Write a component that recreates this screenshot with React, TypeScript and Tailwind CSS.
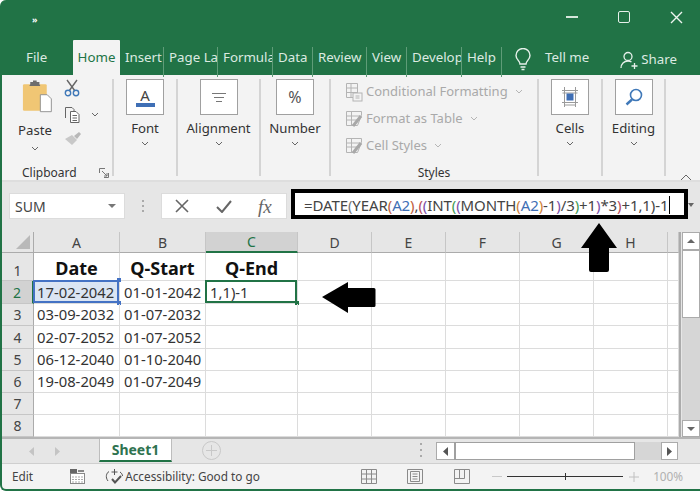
import type { ReactNode } from "react";

const tabs = [
  { label: "Insert", w: "w-[44px]" },
  { label: "Page La", w: "w-[54px]" },
  { label: "Formula", w: "w-[55px]" },
  { label: "Data", w: "w-[40px]" },
  { label: "Review", w: "w-[54px]" },
  { label: "View", w: "w-[40px]" },
  { label: "Develop", w: "w-[55px]" },
  { label: "Help", w: "w-[40px]" },
];

const columns = ["A", "B", "C", "D", "E", "F", "G", "H", ""];
const rowHeights = ["h-[28px]", "h-[23px]", "h-[22px]", "h-[23px]", "h-[22px]", "h-[22px]", "h-[22px]", "h-[22px]"];
const dates = [
  ["17-02-2042", "01-01-2042"],
  ["03-09-2032", "01-07-2032"],
  ["02-07-2052", "01-07-2052"],
  ["06-12-2040", "01-10-2040"],
  ["19-08-2049", "01-07-2049"],
];

function Chevron({ className = "text-[#666]" }: { className?: string }) {
  return (
    <svg width="8" height="5" viewBox="0 0 8 5" className={className}>
      <path d="M1 1l3 3 3-3" fill="none" stroke="currentColor" strokeWidth="1" />
    </svg>
  );
}

function BigGroup({ w, label, children }: { w: string; label: string; children: ReactNode }) {
  return (
    <div className={`${w} h-[97px] border-r-2 border-[#d4d4d4] flex flex-col items-center`}>
      <div className="w-[38px] h-[36px] bg-white border border-[#a0a0a0] flex items-center justify-center">
        {children}
      </div>
      <div className="mt-[3px] text-[13.2px] leading-[20px] text-[#333]">{label}</div>
      <div className="mt-[3px] flex"><Chevron /></div>
    </div>
  );
}

function StyleRow({ label, icon }: { label: string; icon: ReactNode }) {
  return (
    <div className="h-[27px] flex items-center gap-[3px] pl-[14px] text-[13px] text-[#a9a9a9]">
      {icon}
      <span>{label}</span>
      <span className="ml-[4px] flex"><Chevron className="text-[#b5b5b5]" /></span>
    </div>
  );
}

function ConditionalIcon() {
  return (
    <svg width="18" height="20" viewBox="0 0 18 20" fill="none" stroke="#b4b4b4">
      <path d="M1.5 1.5h11v14h-11zM1.5 6h11M1.5 10.5h11M6 1.5v14" />
      <rect x="8" y="11" width="9" height="8" fill="#f3f3f3" />
      <path d="M10.5 14h4M10.5 16h4" />
    </svg>
  );
}

function TableIcon() {
  return (
    <svg width="18" height="18" viewBox="0 0 18 18" fill="none" stroke="#b4b4b4">
      <path d="M1.5 1.5h15v4l-4 10h-11zM1.5 6h14M1.5 10h12M6.5 1.5v14" />
      <path d="M8 16l8-10" stroke="#a8a8a8" strokeWidth="3" />
    </svg>
  );
}

function FormulaText() {
  return (
    <span className="tracking-[-0.1px]">
      =DATE<span className="text-[#777]">(</span>YEAR<span className="text-[#c0603c]">(</span>
      <span className="text-[#3f6fb5]">A2</span>
      <span className="text-[#c0603c]">)</span>,<span className="text-[#b84a5a]">(</span>
      <span className="text-[#7b4fa8]">(</span>INT<span className="text-[#3f9a55]">(</span>
      <span className="text-[#7b4fa8]">(</span>MONTH<span className="text-[#d0813a]">(</span>
      <span className="text-[#3f6fb5]">A2</span>
      <span className="text-[#d0813a]">)</span>-1<span className="text-[#7b4fa8]">)</span>/3
      <span className="text-[#3f9a55]">)</span>+1<span className="text-[#7b4fa8]">)</span>*3
      <span className="text-[#b84a5a]">)</span>+1,1)-1
    </span>
  );
}

function ColumnHeader({ label }: { label: string }) {
  const active = label === "C";
  return (
    <div
      className={`h-[21px] flex items-center justify-center text-[14px] border-r border-[#c6c6c6] ${
        active ? "bg-[#d2d2d2] text-[#217346] border-b-2 border-b-[#217346]" : "bg-[#e6e6e6] text-[#444] border-b border-b-[#ababab]"
      }`}
    >
      {label}
    </div>
  );
}

function SheetRow({ index }: { index: number }) {
  const row = index + 1;
  const values = row >= 2 && row <= 6 ? dates[row - 2] : null;
  const height = rowHeights[index];
  const line = "border-r border-b border-[#dcdcdc]";
  return (
    <>
      <div
        className={`${height} flex items-center justify-center text-[14px] border-b border-[#c6c6c6] ${
          row === 2 ? "bg-[#d2d2d2] text-[#217346] border-r-2 border-r-[#217346]" : "bg-[#e6e6e6] text-[#444] border-r border-r-[#ababab]"
        } ${row === 1 ? "pt-[8px]" : ""}`}
      >
        {row}
      </div>
      {row === 1 ? (
        ["Date", "Q-Start", "Q-End"].map((title) => (
          <div key={title} className={`${height} ${line} flex items-center justify-center pt-[3px] text-[18px] font-bold text-[#111]`}>
            {title}
          </div>
        ))
      ) : (
        <>
          <div className={`${height} ${line} relative flex items-center pl-[3px] text-[14.8px] text-[#333] ${row === 2 ? "bg-[#dbe5f3]" : ""}`}>
            {values?.[0]}
            {row === 2 && (
              <>
                <div className="absolute inset-0 -top-px -left-px border-2 border-[#4472c4]" />
                <div className="absolute -top-[3px] -right-[2px] w-[4px] h-[4px] bg-[#4472c4]" />
                <div className="absolute -bottom-[2px] -right-[2px] w-[4px] h-[4px] bg-[#4472c4]" />
              </>
            )}
          </div>
          <div className={`${height} ${line} flex items-center pl-[4px] text-[14.8px] text-[#333]`}>{values?.[1]}</div>
          <div className={`${height} ${line} relative flex items-center pl-[4px] text-[14.8px] text-[#333]`}>
            {row === 2 && (
              <>
                1,1)-1
                <div className="absolute inset-0 -top-px -left-px border-2 border-[#217346]" />
                <div className="absolute -bottom-[2px] -right-[2px] w-[4px] h-[4px] bg-[#217346]" />
              </>
            )}
          </div>
        </>
      )}
      {[0, 1, 2, 3, 4, 5].map((cell) => (
        <div key={cell} className={`${height} ${line}`} />
      ))}
    </>
  );
}

function ScrollButton({ children, className = "" }: { children: ReactNode; className?: string }) {
  return (
    <div className={`bg-white border border-[#ababab] flex items-center justify-center ${className}`}>{children}</div>
  );
}

export default function App() {
  return (
    <div
      className="relative w-[700px] h-[491px] overflow-hidden bg-[#217346] rounded-tl-[6px] rounded-bl-[6px] border-l-2 border-b-2 border-[#217346] text-[#333]"
      style={{ fontFamily: '"Noto Sans", "Open Sans", sans-serif' }}
    >
      {/* title bar */}
      <div className="h-[40px] flex items-center text-white">
        <span className="ml-[30px] text-[9px] font-bold">»</span>
        <div className="ml-auto flex items-center pr-[17px] pb-[6px]">
          <div className="w-[12px] h-[2px] bg-[#d5e6db]" />
          <div className="ml-[40px] w-[12px] h-[12px] rounded-[2px] border-[1.5px] border-[#e6f0ea]" />
          <svg className="ml-[40px]" width="13" height="13" viewBox="0 0 13 13">
            <path d="M1 1l11 11M12 1L1 12" stroke="#eef5f0" strokeWidth="1.4" />
          </svg>
        </div>
      </div>

      {/* tabs */}
      <div className="h-[35px] flex text-[13.3px] text-[#dceae1]">
        <div className="w-[71px] pl-[24px] pt-[8px]">File</div>
        <div className="w-[47px] bg-[#f3f3f3] text-[#217346] text-center pt-[8px] rounded-t-[1px]">Home</div>
        <div className="flex items-center pt-[2px] h-[33px] mt-[4px]">
          {tabs.map((tab) => (
            <div key={tab.label} className={`${tab.w} h-[30px] border-r border-[#5f9c78] pl-[5px] pt-[1px] overflow-hidden whitespace-nowrap`}>
              {tab.label}
            </div>
          ))}
        </div>
        <svg className="ml-[12px] mt-[8px]" width="18" height="23" viewBox="0 0 18 23" fill="none" stroke="#e6f0ea" strokeWidth="1.4">
          <path d="M6 16c0-3-4-4.500-4-8.500a7 7 0 0 1 14 0c0 4-4 5.500-4 8.500zM6.500 19h5M7.500 21.500h3" />
        </svg>
        <div className="ml-[13px] pt-[8px]">Tell me</div>
        <svg className="ml-[31px] mt-[11px]" width="20" height="19" viewBox="0 0 20 19" fill="none" stroke="#e6f0ea" strokeWidth="1.3">
          <circle cx="8" cy="5.5" r="4" />
          <path d="M1 17c0-4 3-7 7-7 1.500 0 2.500.3 3.500 1M14.500 12v6M11.500 15h6" />
        </svg>
        <div className="ml-[1px] pt-[10px]">Share</div>
      </div>

      {/* ribbon */}
      <div className="h-[105px] bg-[#f3f3f3] flex pt-[4px]">
        <div className="w-[112px] h-[97px] border-r-2 border-[#d4d4d4] flex flex-col">
          <div className="flex">
            <div className="w-[66px] flex flex-col items-center">
              <svg className="ml-[6px]" width="33" height="36" viewBox="0 0 36 38">
                <rect x="1" y="5" width="26" height="29" rx="1.5" fill="#f0c674" />
                <path d="M9 5V2.500h3V1h4v1.500h3V5l1 2H8z" fill="#6e6e6e" />
                <path d="M20 16.500h7.500l4.500 4.500v14H20z" fill="#fff" stroke="#8c8c8c" />
              </svg>
              <div className="mt-[5px] text-[13.2px] leading-[20px]">Paste</div>
              <div className="mt-[6px] flex"><Chevron /></div>
            </div>
            <div className="flex flex-col items-start -ml-[4px]">
              <svg width="16" height="18" viewBox="0 0 16 18" fill="none">
                <path d="M3 1l8 11M13 1L5 12" stroke="#666" strokeWidth="1.4" />
                <circle cx="4" cy="14" r="2.7" stroke="#3f78b8" strokeWidth="1.4" />
                <circle cx="12" cy="14" r="2.7" stroke="#3f78b8" strokeWidth="1.4" />
              </svg>
              <div className="mt-[9px] flex items-center gap-[10px]">
                <svg width="17" height="17" viewBox="0 0 17 17" fill="none" stroke="#666">
                  <path d="M1.5 12V1.5H8l2 2v2" />
                  <path d="M6.5 5.500H12l3 3v8H6.500zM8.500 9.500h4.500M8.500 12h4.500M8.500 14.500h4.500" fill="#fff" />
                </svg>
                <Chevron />
              </div>
              <svg className="mt-[8px] ml-[1px]" width="17" height="15" viewBox="0 0 17 15">
                <path d="M0 8l7-4 5 5-5 5z" fill="#c8c8c8" />
                <path d="M9 5l5-4 2 2-4 5z" fill="#b8b8b8" />
              </svg>
            </div>
          </div>
          <div className="mt-auto -mb-[5px] pl-[20px] pr-[3px] flex items-center justify-between text-[12px] leading-[16px]">
            <span>Clipboard</span>
            <svg width="10" height="10" viewBox="0 0 10 10" fill="none" stroke="#777">
              <path d="M9.5 5v4.500H5M.5 5V.5H6M3 3l5 5M8 5v3H5" />
            </svg>
          </div>
        </div>

        <BigGroup w="w-[64px]" label="Font">
          <div className="flex flex-col items-center">
            <span className="text-[15px] leading-[16px] text-[#444]">A</span>
            <div className="w-[19px] h-[4px] bg-[#3f6fb5]" />
          </div>
        </BigGroup>
        <BigGroup w="w-[83px]" label="Alignment">
          <svg width="14" height="9" viewBox="0 0 14 9" stroke="#777">
            <path d="M0 .5h14M2 4.500h10M4 8.500h6" />
          </svg>
        </BigGroup>
        <BigGroup w="w-[70px]" label="Number">
          <span className="text-[16px] text-[#555]">%</span>
        </BigGroup>

        <div className="w-[208px] h-[97px] border-r-2 border-[#d4d4d4] flex flex-col">
          <div className="-mt-[1px]">
            <StyleRow label="Conditional Formatting" icon={<ConditionalIcon />} />
            <StyleRow label="Format as Table" icon={<TableIcon />} />
            <StyleRow label="Cell Styles" icon={<TableIcon />} />
          </div>
          <div className="mt-auto -mb-[5px] text-center text-[12px] leading-[16px]">Styles</div>
        </div>

        <BigGroup w="w-[64px]" label="Cells">
          <svg width="16" height="20" viewBox="0 0 16 20" fill="none" stroke="#9a9a9a">
            <path d="M2.5 0v20M13.500 0v20M0 3.500h16M0 15.500h16M.5 6h15M2.500 18h11" />
            <rect x="4.5" y="6.5" width="7" height="7" fill="#3f6fb5" stroke="none" />
          </svg>
        </BigGroup>
        <BigGroup w="w-[63px]" label="Editing">
          <svg width="18" height="18" viewBox="0 0 18 18" fill="none" stroke="#3f78b8">
            <circle cx="11" cy="7" r="5.5" strokeWidth="1.6" />
            <path d="M7 11.500L1.500 16.500" strokeWidth="2.4" />
          </svg>
        </BigGroup>
        <div className="flex-1 flex items-end justify-end pr-[8px] pb-[0px]">
          <svg width="12" height="7" viewBox="0 0 12 7" className="-mb-[1px]">
            <path d="M1 6l5-5 5 5" fill="none" stroke="#666" />
          </svg>
        </div>
      </div>

      {/* formula bar */}
      <div className="h-[52px] bg-[#e6e6e6] border-t-2 border-[#dedede] flex">
        <div className="ml-[7px] mt-[11px] w-[116px] h-[26px] bg-white border border-[#dcdcdc] flex items-center justify-between pl-[5px] pr-[8px] text-[14px] text-[#444]">
          SUM
          <svg width="8" height="4" viewBox="0 0 8 4"><path d="M0 0h8L4 4z" fill="#777" /></svg>
        </div>
        <div className="w-[36px] mt-[16px] h-[16px] flex flex-col items-center justify-between py-[2px]">
          <div className="w-[2px] h-[2px] bg-[#aaa]" />
          <div className="w-[2px] h-[2px] bg-[#aaa]" />
          <div className="w-[2px] h-[2px] bg-[#aaa]" />
        </div>
        <div className="mt-[11px] w-[126px] h-[26px] bg-white border border-[#dcdcdc] flex items-center pl-[13px] text-[#666]">
          <svg width="14" height="14" viewBox="0 0 14 14"><path d="M1 1l12 12M13 1L1 13" stroke="#666" strokeWidth="1.6" /></svg>
          <svg className="ml-[27px]" width="16" height="13" viewBox="0 0 16 13"><path d="M1 7l5 5L15 1" fill="none" stroke="#666" strokeWidth="2" /></svg>
          <span className="ml-[26px] text-[19px] italic leading-none" style={{ fontFamily: '"Liberation Serif", serif' }}>fx</span>
        </div>
        <div className="ml-[4px] mt-[7px] w-[397px] h-[30px] bg-white border-[4px] border-black flex items-center pl-[9px] pt-[2px] text-[15px] text-[#444] whitespace-nowrap overflow-hidden">
          <FormulaText />
          <div className="ml-[1px] w-px h-[18px] bg-black" />
        </div>
        <div className="mt-[21px] flex">
          <svg width="6" height="4" viewBox="0 0 6 4"><path d="M0 0h6L3 4z" fill="#666" /></svg>
        </div>
      </div>

      {/* sheet grid */}
      <div className="flex bg-white h-[205px]">
        <div className="grid grid-cols-[32px_86px_86px_92px_74px_74px_74px_74px_74px_11px] content-start h-[205px]">
          <div className="h-[21px] bg-[#e6e6e6] border-r border-b border-[#ababab] flex items-end justify-end pr-[3px] pb-[3px]">
            <svg width="14" height="14" viewBox="0 0 14 14"><path d="M14 0v14H0z" fill="#b9b9b9" /></svg>
          </div>
          {columns.map((column, i) => (
            <ColumnHeader key={i} label={column} />
          ))}
          {rowHeights.map((_, index) => (
            <SheetRow key={index} index={index} />
          ))}
        </div>
        <div className="flex-1 bg-[#e6e6e6] border-l-2 border-[#ababab] pl-[1px] flex flex-col">
          <ScrollButton className="h-[18px] w-[18px]">
            <svg width="8" height="4" viewBox="0 0 8 4"><path d="M0 4h8L4 0z" fill="#666" /></svg>
          </ScrollButton>
          <div className="w-[18px] h-[68px] bg-white border border-[#ababab]" />
          <div className="flex-1 bg-[#d6d6d6] w-[18px]" />
          <ScrollButton className="h-[17px] w-[18px]">
            <svg width="8" height="4" viewBox="0 0 8 4"><path d="M0 0h8L4 4z" fill="#666" /></svg>
          </ScrollButton>
        </div>
      </div>

      {/* sheet tabs */}
      <div className="h-[27px] bg-[#e6e6e6] border-t-2 border-[#b5b5b5] border-b border-b-[#cfcfcf] flex">
        <div className="flex items-center pl-[27px] gap-[21px] w-[97px]">
          <svg width="5" height="9" viewBox="0 0 5 9"><path d="M5 0v9L0 4.500z" fill="#c4c4c4" /></svg>
          <svg width="5" height="9" viewBox="0 0 5 9"><path d="M0 0v9l5-4.500z" fill="#c4c4c4" /></svg>
        </div>
        <div className="w-[73px] h-[23px] bg-white border-x border-[#bdbdbd] border-b-2 border-b-[#217346] flex items-center justify-center text-[14px] font-bold text-[#2f7350]">
          Sheet1
        </div>
        <div className="ml-[30px] mt-[2px] w-[19px] h-[19px] rounded-full border border-[#c8c8c8] flex items-center justify-center">
          <svg width="11" height="11" viewBox="0 0 11 11"><path d="M5.5 0v11M0 5.500h11" stroke="#c8c8c8" /></svg>
        </div>
        <div className="ml-[199px] mt-[4px] h-[14px] flex flex-col justify-between items-center w-[2px]">
          <div className="w-[2px] h-[2px] bg-[#aaa]" />
          <div className="w-[2px] h-[2px] bg-[#aaa]" />
          <div className="w-[2px] h-[2px] bg-[#aaa]" />
        </div>
        <div className="ml-[14px] mt-[3px] h-[18px] w-[242px] flex">
          <ScrollButton className="w-[18px] border-r-0">
            <svg width="5" height="9" viewBox="0 0 5 9"><path d="M5 0v9L0 4.500z" fill="#555" /></svg>
          </ScrollButton>
          <div className="w-[181px] bg-white border border-[#a0a0a0] border-l-2" />
          <div className="flex-1 bg-[#d6d6d6]" />
          <ScrollButton className="w-[17px]">
            <svg width="5" height="9" viewBox="0 0 5 9"><path d="M0 0v9l5-4.500z" fill="#555" /></svg>
          </ScrollButton>
        </div>
      </div>

      {/* status bar */}
      <div className="h-[25px] bg-[#f3f3f3] flex items-center text-[11.8px] text-[#444]">
        <span className="ml-[10px]">Edit</span>
        <svg className="ml-[37px]" width="15" height="15" viewBox="0 0 15 15">
          <rect x="0" y="0" width="7" height="5" fill="#666" />
          <rect x="0.5" y="4.5" width="14" height="10" fill="#fff" stroke="#888" />
          <path d="M2 8h11M2 10.500h11M2 13h11" stroke="#aaa" strokeDasharray="2 1" />
          <rect x="8" y="1" width="6" height="2" fill="#888" />
        </svg>
        <svg className="ml-[20px]" width="19" height="16" viewBox="0 0 19 16" fill="none" stroke="#555">
          <path d="M4 2.500C1.500 4 0 8 3 12M9.500 0v6M6.500 3h6M15 3c1.500 1 2.500 2.500 2.500 4" />
          <path d="M7 10l3 3.500L16 7" strokeWidth="2" />
        </svg>
        <span className="ml-px w-[134px] whitespace-nowrap">Accessibility: Good to go</span>
        <svg className="ml-[102px]" width="16" height="15" viewBox="0 0 16 15" fill="none" stroke="#8a8a8a">
          <path d="M.5.500h15v14H.5zM5.500.500v14M10.500.500v14M.5 5h15M.5 10h15" />
        </svg>
        <svg className="ml-[30px]" width="16" height="15" viewBox="0 0 16 15" fill="none" stroke="#8a8a8a">
          <path d="M.5.500h15v14H.5z" />
          <path d="M3.5 2.500h9v10h-9zM5.500 5h5M5.500 7.500h5M5.500 10h5" />
        </svg>
        <svg className="ml-[31px]" width="16" height="15" viewBox="0 0 16 15" fill="none" stroke="#8a8a8a">
          <path d="M.5.500h15v14H.5zM.5 9.500h10V.500M5.500.500v9" />
        </svg>
        <div className="ml-[22px] w-[10px] h-px bg-[#c8c8c8]" />
        <div className="ml-[5px] mr-[6px] relative w-[116px] h-px bg-[#333]">
          <div className="absolute left-[58px] -top-[3px] w-px h-[7px] bg-[#333]" />
        </div>
        <svg width="10" height="10" viewBox="0 0 10 10"><path d="M5 0v10M0 5h10" stroke="#c0c0c0" /></svg>
        <span className="ml-[14px] text-[#b0b0b0]">100%</span>
      </div>

      {/* callout arrows drawn over the sheet */}
      <svg className="absolute left-[576px] top-[221px]" width="42" height="53" viewBox="0 0 42 53">
        <path d="M21 2L39 27H31V49a2 2 0 0 1-2 2H13a2 2 0 0 1-2-2V27H3z" fill="#000" />
      </svg>
      <svg className="absolute left-[319px] top-[280px]" width="56" height="35" viewBox="0 0 56 35">
        <path d="M1 17L27 2V8H53a1.500 1.500 0 0 1 1.500 1.500V25.500a1.500 1.500 0 0 1-1.500 1.500H27V33z" fill="#000" />
      </svg>
    </div>
  );
}
